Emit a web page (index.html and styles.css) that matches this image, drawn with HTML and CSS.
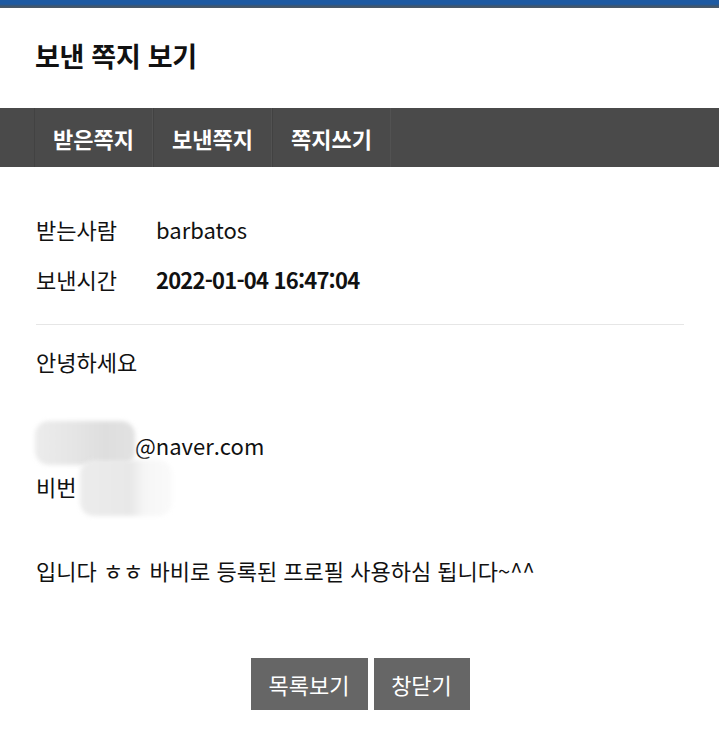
FILE: index.html
```html
<!DOCTYPE html>
<html lang="ko">
<head>
<meta charset="utf-8">
<title>보낸 쪽지 보기</title>
<link rel="stylesheet" href="styles.css">
</head>
<body>
<div class="topbar"></div>
<header class="head">
  <h1 class="title">보낸 쪽지 보기</h1>
</header>
<nav class="tabs">
  <a class="tab">받은쪽지</a>
  <a class="tab">보낸쪽지</a>
  <a class="tab">쪽지쓰기</a>
</nav>
<section class="content">
  <dl class="meta">
    <div class="row"><dt>받는사람</dt><dd>barbatos</dd></div>
    <div class="row"><dt>보낸시간</dt><dd class="strong">2022-01-04 16:47:04</dd></div>
  </dl>
  <div class="msg">
    <p>안녕하세요</p>
    <p>&nbsp;</p>
    <p><span class="blur blur-a"></span>@naver.com</p>
    <p>비번<span class="blur blur-b"></span></p>
    <p>&nbsp;</p>
    <p>입니다 ㅎㅎ 바비로 등록된 프로필 사용하심 됩니다~^^</p>
  </div>
  <div class="actions">
    <button class="btn">목록보기</button>
    <button class="btn">창닫기</button>
  </div>
</section>
</body>
</html>
```

FILE: styles.css
```css
* { box-sizing: border-box; }
html, body { margin: 0; padding: 0; background: #fff; }
body {
  font-family: "Noto Sans CJK KR", "Noto Sans", sans-serif;
  color: #111;
}
.topbar {
  height: 8px;
  background: linear-gradient(to bottom, #1e5aa2 0, #1e5aa2 4px, #3d5670 6px, #4e5a66 8px);
}
.head {
  height: 100px;
  display: flex;
  align-items: center;
  padding: 0 35px;
}
.title {
  margin: 0;
  font-size: 27px;
  font-weight: 700;
  letter-spacing: -0.3px;
  color: #111;
  position: relative;
  top: -3px;
}
.tabs {
  height: 59px;
  background: #4a4a4a;
  display: flex;
  padding-left: 34px;
}
.tab {
  width: 119px;
  display: flex;
  align-items: center;
  justify-content: center;
  color: #fff;
  font-size: 22px;
  font-weight: 700;
  border-left: 1px solid #424242;
  border-right: 1px solid #525252;
}
.content {
  padding: 0 35px 0 36px;
}
.meta {
  margin: 0;
  padding: 37px 0 20px;
  border-bottom: 1px solid #e6e6e6;
}
.row {
  display: flex;
  align-items: center;
  height: 50px;
  font-size: 22px;
}
.row dt { width: 120px; }
.row dd { margin: 0; }
.row dd.strong { font-weight: 700; letter-spacing: -0.8px; }
.msg {
  padding-top: 16px;
  font-size: 22px;
}
.msg p {
  margin: 0;
  height: 41.8px;
  line-height: 41.8px;
  white-space: nowrap;
}
.blur {
  display: inline-block;
  vertical-align: top;
  border-radius: 14px;
  filter: blur(2px);
}
.blur-a {
  width: 100px;
  height: 44px;
  margin-top: -4px;
  margin-left: -1px;
  background: linear-gradient(to right, #ececec 0, #e6e6e6 35%, #dedede 70%, #e2e2e2 100%);
}
.blur-b {
  width: 92px;
  height: 56px;
  margin-left: 4px;
  margin-top: -6px;
  margin-bottom: -20px;
  background: linear-gradient(to right, #ececec 0, #e8e8e8 55%, #f6f6f6 70%, #fafafa 100%);
}
.actions {
  display: flex;
  justify-content: center;
  gap: 6px;
  padding-top: 66px;
}
.btn {
  height: 52px;
  padding: 0;
  background: #666;
  color: #fff;
  border: 0;
  border-radius: 0;
  font-family: inherit;
  font-size: 22px;
}
.btn:first-child { width: 117px; }
.btn:last-child { width: 96px; }
```
